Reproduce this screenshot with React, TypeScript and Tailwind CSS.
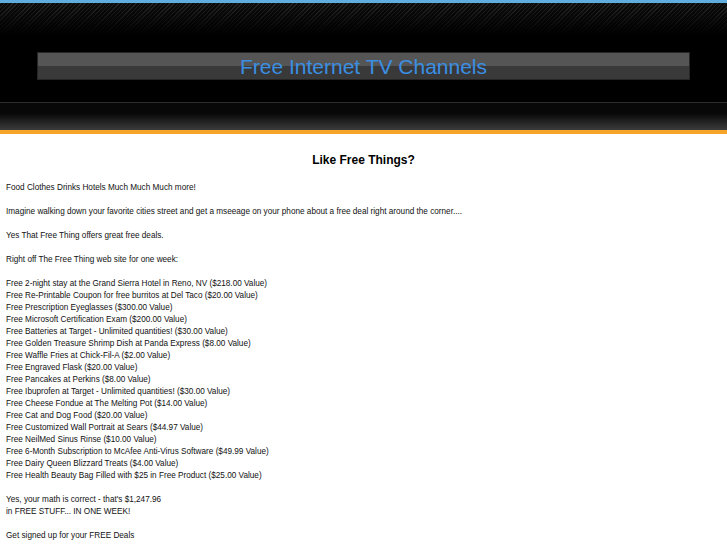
const deals = [
  'Free 2-night stay at the Grand Sierra Hotel in Reno, NV ($218.00 Value)',
  'Free Re-Printable Coupon for free burritos at Del Taco ($20.00 Value)',
  'Free Prescription Eyeglasses ($300.00 Value)',
  'Free Microsoft Certification Exam ($200.00 Value)',
  'Free Batteries at Target - Unlimited quantities! ($30.00 Value)',
  'Free Golden Treasure Shrimp Dish at Panda Express ($8.00 Value)',
  'Free Waffle Fries at Chick-Fil-A ($2.00 Value)',
  'Free Engraved Flask ($20.00 Value)',
  'Free Pancakes at Perkins ($8.00 Value)',
  'Free Ibuprofen at Target - Unlimited quantities! ($30.00 Value)',
  'Free Cheese Fondue at The Melting Pot ($14.00 Value)',
  'Free Cat and Dog Food ($20.00 Value)',
  'Free Customized Wall Portrait at Sears ($44.97 Value)',
  'Free NeilMed Sinus Rinse ($10.00 Value)',
  'Free 6-Month Subscription to McAfee Anti-Virus Software ($49.99 Value)',
  'Free Dairy Queen Blizzard Treats ($4.00 Value)',
  'Free Health Beauty Bag Filled with $25 in Free Product ($25.00 Value)',
];

function Header() {
  return (
    <div className="flex flex-col bg-black">
      <div className="h-[3px] bg-[#5eaee2]" />
      {/* carbon stripes fading into black */}
      <div className="h-[32px] bg-[linear-gradient(to_bottom,rgba(0,0,0,0.1),#000),repeating-linear-gradient(135deg,#2a2a2a_0px,#2a2a2a_1px,#0d0d0d_1px,#0d0d0d_3px)]" />
      <div className="h-[17px]" />
      <div className="mx-[37px] h-[28px] border border-[#262626] bg-[linear-gradient(to_bottom,#555_0,#555_50%,#393939_50%,#393939_100%)] flex items-center justify-center">
        <h1 className="text-[21px] leading-none text-[#3b8fe3] font-['Liberation_Sans',Arial,sans-serif]">
          Free Internet TV Channels
        </h1>
      </div>
      <div className="h-[22px]" />
      <div className="h-px bg-[#2c2c2c]" />
      <div className="h-[11px] bg-[#080808]" />
      <div className="h-[16px] bg-[linear-gradient(to_bottom,#0a0a0a,#3c3c3c)]" />
      <div className="h-[4px] bg-[#f6a52a]" />
    </div>
  );
}

export default function App() {
  return (
    <div className="min-h-screen bg-white font-['Liberation_Sans',Arial,sans-serif] text-[#111]">
      <Header />
      <h2 className="pt-[19px] pb-[15px] text-center text-[12px] leading-[14px] font-bold text-black">
        Like Free Things?
      </h2>
      <div className="px-[6px] text-[8.2px] leading-[12px]">
        <p>Food Clothes Drinks Hotels Much Much Much more!</p>
        <br />
        <p>
          Imagine walking down your favorite cities street and get a mseeage on your phone about a free deal right
          around the corner....
        </p>
        <br />
        <p>Yes That Free Thing offers great free deals.</p>
        <br />
        <p>Right off The Free Thing web site for one week:</p>
        <br />
        <ul>
          {deals.map((d) => (
            <li key={d}>{d}</li>
          ))}
        </ul>
        <br />
        <p>
          Yes, your math is correct - that's $1,247.96
          <br />
          in FREE STUFF... IN ONE WEEK!
        </p>
        <br />
        <p>Get signed up for your FREE Deals</p>
      </div>
    </div>
  );
}
